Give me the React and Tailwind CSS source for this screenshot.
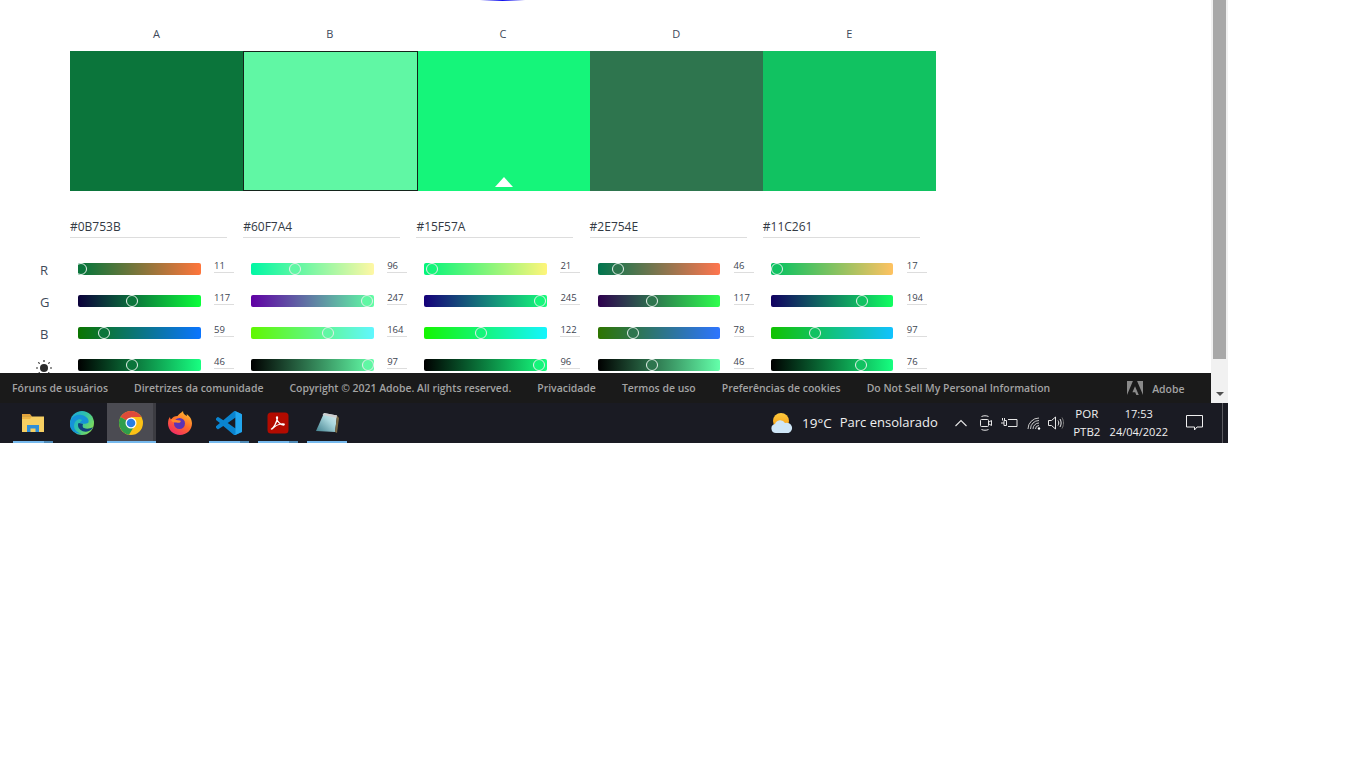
import React from "react";
import { SiAdobe } from "react-icons/si";

// swatches of the colour wheel panel
const swatches = [
  { label: "A", hex: "#0B753B", rgb: [11, 117, 59], v: 46 },
  { label: "B", hex: "#60F7A4", rgb: [96, 247, 164], v: 97, selected: true },
  { label: "C", hex: "#15F57A", rgb: [21, 245, 122], v: 96, base: true },
  { label: "D", hex: "#2E754E", rgb: [46, 117, 78], v: 46 },
  { label: "E", hex: "#11C261", rgb: [17, 194, 97], v: 76 },
];

const footerLinks = [
  "Fóruns de usuários",
  "Diretrizes da comunidade",
  "Copyright © 2021 Adobe. All rights reserved.",
  "Privacidade",
  "Termos de uso",
  "Preferências de cookies",
  "Do Not Sell My Personal Information",
];

const css = (c) => `rgb(${c[0]},${c[1]},${c[2]})`;

// gradient for one channel slider, channel i running 0..255
const channelGradient = (rgb, i) => {
  const from = [...rgb];
  const to = [...rgb];
  from[i] = 0;
  to[i] = 255;
  return `linear-gradient(to right, ${css(from)}, ${css(to)})`;
};

const brightnessGradient = (rgb) => {
  const max = Math.max(...rgb);
  const full = rgb.map((c) => Math.round((c * 255) / max));
  return `linear-gradient(to right, #000, ${css(full)})`;
};

const Slider = ({ background, ratio, color, value }) => (
  <div className="flex items-start w-[173.2px] pl-2">
    <div className="relative w-[122.5px] h-3 rounded-[2px] overflow-x-clip" style={{ background }}>
      <div
        className="absolute top-0 w-3 h-3 rounded-full border border-[#e4efe9]"
        style={{ left: ratio * 122 - 8, background: color }}
      />
    </div>
    <div className="ml-[13.5px] mt-[-4px] w-5 h-[14px] pt-px border-b border-[#dddddd] text-[9.5px] leading-[12px] font-medium text-[#3d4450]">
      {value}
    </div>
  </div>
);

const SunIcon = () => (
  <svg width="16" height="16" viewBox="0 0 16 16" className="-ml-[4px] mt-px">
    <circle cx="8" cy="8" r="4" fill="#2b2b2b" />
    <g stroke="#2b2b2b" strokeWidth="1.2">
      <path d="M8 0v2M8 14v2M0 8h2M14 8h2M2.3 2.3l1.4 1.4M12.3 12.3l1.4 1.4M2.3 13.7l1.4-1.4M12.3 3.7l1.4-1.4" />
    </g>
  </svg>
);

const SliderRow = ({ label, render }) => (
  <div className="flex h-8">
    <div className="w-[30px] text-[13px] leading-[14px] text-[#3e4a5a]">{label}</div>
    {swatches.map((s) => (
      <React.Fragment key={s.label}>{render(s)}</React.Fragment>
    ))}
  </div>
);

const FolderIcon = () => (
  <svg width="22" height="20" viewBox="0 0 22 20">
    <path d="M0 1h8l2 2.5H0z" fill="#e2a23b" />
    <path d="M0 3.5h22V19H0z" fill="#f6cf62" />
    <path d="M0 3.5h10L8 6H0z" fill="#eeb544" />
    <path d="M5 19v-7h12v7h-3.5v-3.5h-5V19z" fill="#2f8fd8" />
  </svg>
);

const EdgeIcon = () => (
  <svg width="24" height="24" viewBox="0 0 24 24">
    <defs>
      <linearGradient id="edgeTop" x1="0" y1="0" x2="1" y2="0.6">
        <stop offset="0" stopColor="#1ba4e0" />
        <stop offset="0.55" stopColor="#2fc3a8" />
        <stop offset="1" stopColor="#7fdc5a" />
      </linearGradient>
    </defs>
    <circle cx="12" cy="12" r="12" fill="url(#edgeTop)" />
    <path d="M1 9c2-5 10-7 15-3 3 2 3 5 2 6-2 1-6 1-8 0 0-2 2-2 2-3-3-2-8 1-8 6 0 4 4 8 9 7-7 2-14-3-13-10z" fill="#1592d8" />
    <path d="M8 14c0 5 6 8 11 6 2-1 3-2 4-4-3 2-7 2-9 1-1 0-2-2-1-4l-4-1c-1 0-1 1-1 2z" fill="#11407e" />
  </svg>
);

const ChromeIcon = () => (
  <svg width="24" height="24" viewBox="0 0 24 24">
    <circle cx="12" cy="12" r="12" fill="#fbc116" />
    <path d="M12 12 1.6 6A12 12 0 0 1 22.4 6H12z" fill="#de4a3a" />
    <path d="M12 12 1.6 6A12 12 0 0 0 10 23.8L16 14z" fill="#2f9e4b" />
    <circle cx="12" cy="12" r="5.5" fill="#fff" />
    <circle cx="12" cy="12" r="4.3" fill="#2a7de1" />
  </svg>
);

const FirefoxIcon = () => (
  <svg width="24" height="24" viewBox="0 0 24 24">
    <defs>
      <linearGradient id="foxBody" x1="0.8" y1="0" x2="0.2" y2="1">
        <stop offset="0" stopColor="#ffbf2e" />
        <stop offset="0.5" stopColor="#ff6a2b" />
        <stop offset="1" stopColor="#f0246b" />
      </linearGradient>
    </defs>
    <path d="M15 0c0 3 2 4 4 5 0 0 0-1-.5-2 3 2 5.5 5 5.5 9.5C24 19 18.5 24 12 24S0 19 0 12.5C0 9 1 7 2 6c0 1 .5 2 1 2.5C4.5 6 7 5 9.5 5 11 3 13.5 1.5 15 0z" fill="url(#foxBody)" />
    <circle cx="11.5" cy="12.5" r="5.5" fill="#5d33b5" />
    <path d="M3 8.5c3-1 6 1 9 1 1 0 1 1 0 2-1 .5-4 0-5 0-1.5 0-4-1-4-3z" fill="#ff8a2a" />
  </svg>
);

const VsCodeIcon = () => (
  <svg width="26" height="24" viewBox="0 0 100 100" preserveAspectRatio="none">
    <path d="M96 11 75 1a6 6 0 0 0-7 1L28 39 10 26a4 4 0 0 0-5 0l-5 5a4 4 0 0 0 0 6l15 13L0 64a4 4 0 0 0 0 6l5 5a4 4 0 0 0 5 0l18-13 40 37a6 6 0 0 0 7 1l21-10a6 6 0 0 0 4-6V17a6 6 0 0 0-4-6zM75 73 45 50l30-23z" fill="#0a84cf" />
    <path d="M68 2a6 6 0 0 1 7-1l21 10a6 6 0 0 1 4 6v66a6 6 0 0 1-4 6L75 99a6 6 0 0 1-7-1c3 2 7 0 7-3V5c0-3-4-5-7-3z" fill="#22a6ee" />
  </svg>
);

const AcrobatIcon = () => (
  <svg width="22" height="22" viewBox="0 0 22 22">
    <rect width="21" height="21" x="0.5" y="0.5" rx="3.5" fill="#b30b00" />
    <path d="M4.5 17c2-1 5-6 6-11 .3-1.5-1-1.5-1-.5 0 3 3.5 7.5 7 7.5 1 0 1-1 0-1-3-.3-8 1.5-11 4.5-.5.5-1.2.5-1 .5z" fill="none" stroke="#fff" strokeWidth="1.3" />
  </svg>
);

const NotepadIcon = () => (
  <svg width="24" height="24" viewBox="0 0 24 24">
    <defs>
      <linearGradient id="padFill" x1="0" y1="1" x2="1" y2="0">
        <stop offset="0" stopColor="#3f7f8d" />
        <stop offset="0.6" stopColor="#a9d6dc" />
        <stop offset="1" stopColor="#dcecee" />
      </linearGradient>
    </defs>
    <path d="M9 2 22 4.5 20 21 1 20z" fill="url(#padFill)" />
    <path d="M9 2 22 4.5l-.4 2.5L7.5 4z" fill="#cfcfcf" />
    <path d="M22 4.5 24 7l-2 15-2-1z" fill="#7a6a45" />
  </svg>
);

const WeatherIcon = () => (
  <svg width="22" height="20" viewBox="0 0 22 20">
    <defs>
      <linearGradient id="sunFill" x1="0" y1="0" x2="0" y2="1">
        <stop offset="0" stopColor="#ffcb3d" />
        <stop offset="1" stopColor="#f59a14" />
      </linearGradient>
    </defs>
    <circle cx="10" cy="8" r="8" fill="url(#sunFill)" />
    <path d="M5 20a4.5 4.5 0 0 1-1-8.9A5.5 5.5 0 0 1 14 10a4.5 4.5 0 0 1 3.5 10z" fill="#cfe6f7" />
  </svg>
);

const TrayIcons = () => (
  <div className="flex items-center text-[#e6e6e6]">
    <svg width="12" height="12" viewBox="0 0 12 12" className="mr-[13px]" fill="none" stroke="currentColor" strokeWidth="1.1">
      <path d="M0.5 9 6 3.5 11.5 9" />
    </svg>
    <svg width="12" height="16" viewBox="0 0 12 16" className="mr-[9px]" fill="none" stroke="currentColor">
      <path d="M1.5 1.5c2-1 5-1 7 0M1.5 14.5c2 1 5 1 7 0" />
      <rect x="0.5" y="4.5" width="8" height="7" rx="1" />
      <path d="M9 7l2.5-1.5v5L9 9" />
    </svg>
    <svg width="17" height="12" viewBox="0 0 17 12" className="mr-[9px]" fill="none" stroke="currentColor">
      <path d="M0 6h3M3 3.5h2.5v5H3zM1.5 1v2.5M3.5 1v2.5" />
      <path d="M7 2.5h9v7H7" />
    </svg>
    <svg width="14" height="13" viewBox="0 0 14 13" className="mr-[7px]" fill="none" stroke="#c9c9c9">
      <path d="M1 12A11 11 0 0 1 12 1M3.5 12A8.5 8.5 0 0 1 12 3.5M6 12A6 6 0 0 1 12 6M8.5 12A3.5 3.5 0 0 1 12 8.5" />
      <circle cx="12" cy="11.5" r="1.2" fill="#fff" stroke="none" />
    </svg>
    <svg width="16" height="14" viewBox="0 0 16 14" fill="none" stroke="currentColor">
      <path d="M0.5 4.5h3L7.5 1v12l-4-3.5h-3z" />
      <path d="M10 4.5c1 1.5 1 3.5 0 5M12 3c1.5 2.5 1.5 5.5 0 8" />
      <path d="M14 1.5c2 3.5 2 7.5 0 11" stroke="#777" />
    </svg>
  </div>
);

const taskIcons = [
  { id: "files", icon: <FolderIcon />, open: true, split: true },
  { id: "edge", icon: <EdgeIcon /> },
  { id: "chrome", icon: <ChromeIcon />, active: true },
  { id: "firefox", icon: <FirefoxIcon /> },
  { id: "vscode", icon: <VsCodeIcon />, open: true, split: true },
  { id: "acrobat", icon: <AcrobatIcon />, open: true, split: true },
  { id: "notepad", icon: <NotepadIcon />, open: true },
];

const TaskButton = ({ item }) => (
  <div className={`relative w-[49px] h-10 flex items-center justify-center ${item.active ? "bg-[#4b4b52]" : ""}`}>
    {item.icon}
    {item.active && (
      <>
        <div className="absolute right-0 top-0 h-10 w-[3px] bg-[#3c3c42]" />
        <div className="absolute left-0 right-0 bottom-0 h-[2px] bg-[#76b9ed]" />
      </>
    )}
    {item.open && <div className="absolute left-1 right-[5px] bottom-0 h-[2px] bg-[#76b9ed]" />}
    {item.split && <div className="absolute right-[5px] bottom-0 w-[9px] h-[2px] bg-[#4f8bb8]" />}
  </div>
);

export default function App() {
  return (
    <div className="w-[1228px] h-[443px] flex flex-col bg-white font-['Open_Sans',sans-serif]">
      <div className="flex h-[403px]">
        <div className="w-[1211px] flex flex-col">
          {/* colour panel, cut by the footer */}
          <div className="h-[373px] overflow-hidden">
            <div className="ml-[480px] w-[45px] h-px bg-[linear-gradient(to_right,#ffffff,#1010ee,#ffffff)]" />
            <div className="ml-[70px] w-[866px] grid grid-cols-5 mt-[26px] h-[24px] text-[11px] leading-[14px] text-center text-[#3e4a5a]">
              {swatches.map((s) => (
                <div key={s.label}>{s.label}</div>
              ))}
            </div>
            <div className="ml-[70px] w-[866px] h-[140px] grid grid-cols-[173px_175px_172px_173px_173px]">
              {swatches.map((s) => (
                <div
                  key={s.label}
                  className={`flex justify-center items-end pb-1 ${s.selected ? "border border-[#14241b]" : ""}`}
                  style={{ background: s.hex }}
                >
                  {s.base && (
                    <div className="w-0 h-0 border-x-[9px] border-x-transparent border-b-[10px] border-b-white" />
                  )}
                </div>
              ))}
            </div>
            <div className="ml-[70px] w-[866px] grid grid-cols-5 mt-[19px]">
              {swatches.map((s) => (
                <div key={s.label} className="w-[157px] h-[28px] pt-2 border-b border-[#dddddd] text-[12px] leading-[18px] text-[#333a44]">
                  {s.hex}
                </div>
              ))}
            </div>
            <div className="ml-[40px] mt-[25px]">
              <SliderRow
                label="R"
                render={(s) => (
                  <Slider background={channelGradient(s.rgb, 0)} ratio={s.rgb[0] / 255} color={s.hex} value={s.rgb[0]} />
                )}
              />
              <SliderRow
                label="G"
                render={(s) => (
                  <Slider background={channelGradient(s.rgb, 1)} ratio={s.rgb[1] / 255} color={s.hex} value={s.rgb[1]} />
                )}
              />
              <SliderRow
                label="B"
                render={(s) => (
                  <Slider background={channelGradient(s.rgb, 2)} ratio={s.rgb[2] / 255} color={s.hex} value={s.rgb[2]} />
                )}
              />
              <SliderRow
                label={<SunIcon />}
                render={(s) => (
                  <Slider background={brightnessGradient(s.rgb)} ratio={s.v / 100} color={s.hex} value={s.v} />
                )}
              />
            </div>
          </div>
          {/* adobe footer */}
          <div className="h-[30px] pt-px bg-[#1a1a1a] flex items-center pl-3 gap-[26px] text-[10.45px] font-semibold text-[#a3a3a3] whitespace-nowrap">
            {footerLinks.map((link) => (
              <span key={link}>{link}</span>
            ))}
            <div className="ml-[51px] flex items-center gap-[9px]">
              <SiAdobe size={16} className="text-[#8a8a8a]" />
              <span className="mt-[3px]">Adobe</span>
            </div>
          </div>
        </div>
        {/* scrollbar */}
        <div className="w-[17px] bg-[#f1f1f1] flex flex-col items-center">
          <div className="w-[13px] h-[359px] bg-[#a8a8a8]" />
          <div className="mt-[33px] w-0 h-0 border-x-[4px] border-x-transparent border-t-[4px] border-t-[#505050]" />
        </div>
      </div>
      {/* windows taskbar */}
      <div className="h-10 flex items-center bg-[#1a1b23] text-[#f0f0f0] whitespace-nowrap">
        <div className="flex pl-[8.5px]">
          {taskIcons.map((item) => (
            <TaskButton key={item.id} item={item} />
          ))}
        </div>
        <div className="ml-[419.5px] w-[22px] flex justify-center"><WeatherIcon /></div>
        <span className="ml-[9px] text-[13.5px]">19°C</span>
        <span className="ml-2 text-[13px]">Parc ensolarado</span>
        <div className="ml-[17px]"><TrayIcons /></div>
        <div className="ml-2 w-[30px] flex flex-col items-center text-[11.5px] leading-[18px]">
          <span>POR</span>
          <span>PTB2</span>
        </div>
        <div className="ml-[7px] w-[60px] flex flex-col items-center text-[11px] leading-[18px]">
          <span>17:53</span>
          <span>24/04/2022</span>
        </div>
        <svg width="17" height="16" viewBox="0 0 17 16" className="ml-[17px]" fill="none" stroke="#f0f0f0">
          <path d="M0.5 0.5h16v11.5h-5.5l-2.5 3v-3h-8z" />
        </svg>
        <div className="ml-[19px] w-px h-10 bg-[#5a5a60]" />
      </div>
    </div>
  );
}
